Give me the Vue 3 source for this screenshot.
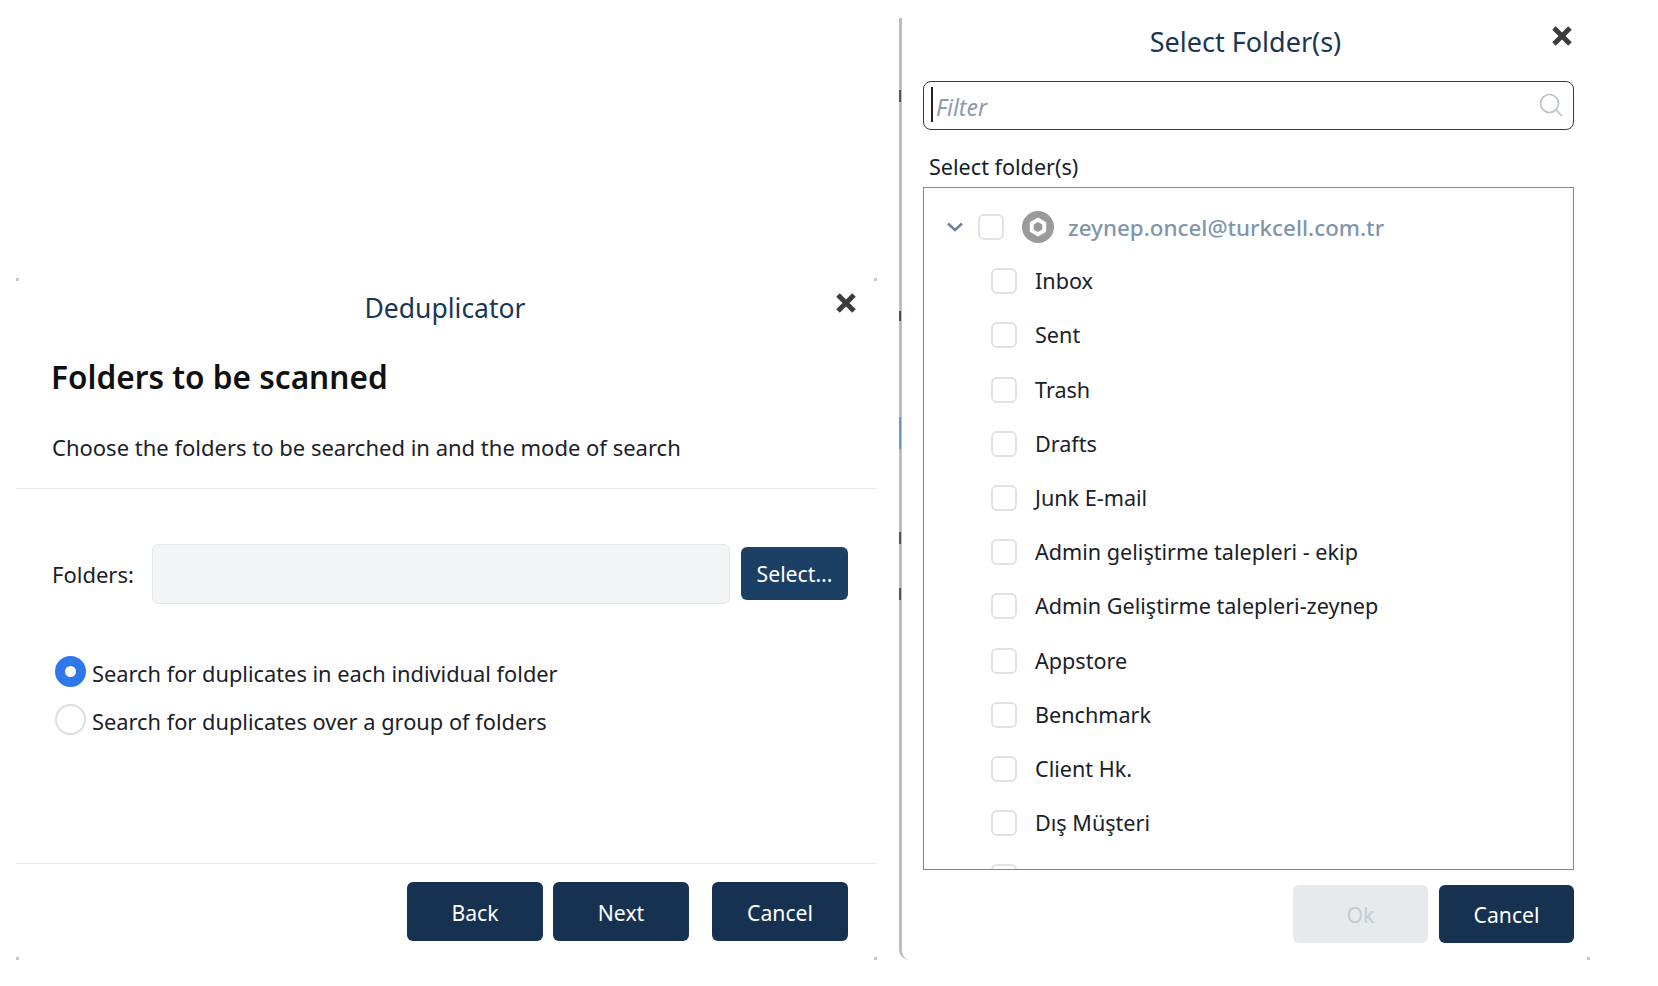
<script setup>
const rows = [
  'Inbox', 'Sent', 'Trash', 'Drafts', 'Junk E-mail',
  'Admin geliştirme talepleri - ekip', 'Admin Geliştirme talepleri-zeynep',
  'Appstore', 'Benchmark', 'Client Hk.', 'Dış Müşteri', 'Genel bilgilendirme'
]
const specks = [
  { top: 72, height: 12, background: '#555' },
  { top: 293, height: 10, background: '#5a4a40' },
  { top: 399, height: 32, background: '#6f97c4' },
  { top: 514, height: 12, background: '#555' },
  { top: 570, height: 12, background: '#555' }
]
</script>

<template>
  <div class="page">
    <section class="left">
      <i class="corner tl"></i><i class="corner tr"></i><i class="corner bl"></i><i class="corner br"></i>
      <header class="left-head">Deduplicator</header>
      <button class="close close-left" aria-label="Close">
        <svg viewBox="0 0 22 22" width="22" height="22"><path d="M3 3 L19 19 M19 3 L3 19" /></svg>
      </button>
      <div class="intro">
        <h1>Folders to be scanned</h1>
        <p>Choose the folders to be searched in and the mode of search</p>
      </div>
      <div class="form-row">
        <label>Folders:</label>
        <div class="readonly"></div>
        <button class="btn select">Select...</button>
      </div>
      <div class="radios">
        <div class="radio-row"><span class="radio on"></span><span class="radio-text">Search for duplicates in each individual folder</span></div>
        <div class="radio-row"><span class="radio"></span><span class="radio-text">Search for duplicates over a group of folders</span></div>
      </div>
      <footer class="left-foot">
        <button class="btn">Back</button>
        <button class="btn">Next</button>
        <button class="btn cancel-gap">Cancel</button>
      </footer>
    </section>

    <section class="right">
      <i v-for="(s, i) in specks" :key="i" class="speck" :style="{ top: s.top + 'px', height: s.height + 'px', background: s.background }"></i>
      <i class="corner rbr"></i>
      <header class="right-head">Select Folder(s)</header>
      <button class="close close-right" aria-label="Close">
        <svg viewBox="0 0 22 22" width="22" height="22"><path d="M3 3 L19 19 M19 3 L3 19" /></svg>
      </button>
      <div class="filter">
        <span class="caret"></span>
        <span class="placeholder">Filter</span>
        <svg class="search" viewBox="0 0 24 24" width="24" height="24">
          <circle cx="10.5" cy="10.5" r="9" />
          <path d="M17 17 L23 23" />
        </svg>
      </div>
      <div class="tree-label">Select folder(s)</div>
      <div class="tree">
        <div class="row root">
          <svg class="chev" viewBox="0 0 16 10" width="16" height="10"><path d="M1 1.5 L8 8 L15 1.5" /></svg>
          <span class="check"></span>
          <svg class="acct" viewBox="0 0 32 32" width="32" height="32">
            <circle cx="16" cy="16" r="16" fill="#9a9a9a" />
            <path d="M16 6.5 L24.2 11.2 V20.8 L16 25.5 L7.8 20.8 V11.2 Z" fill="#fff" />
            <path d="M16 11 L20.3 13.5 V18.5 L16 21 L11.7 18.5 V13.5 Z" fill="#9a9a9a" />
          </svg>
          <span class="email">zeynep.oncel@turkcell.com.tr</span>
        </div>
        <div v-for="r in rows" :key="r" class="row child">
          <span class="check"></span>
          <span class="name">{{ r }}</span>
        </div>
      </div>
      <footer class="right-foot">
        <button class="btn ok" disabled>Ok</button>
        <button class="btn">Cancel</button>
      </footer>
    </section>
  </div>
</template>

<style>
html, body { margin: 0; background: #fff; }
</style>

<style scoped>
.page {
  width: 1658px;
  height: 986px;
  display: flex;
  align-items: flex-start;
  overflow: hidden;
  background: #fff;
  font-family: "Noto Sans", "Open Sans", sans-serif;
  font-size: 21.6px;
  color: #1a2128;
}
button { font-family: inherit; border: 0; cursor: pointer; }
.left {
  position: relative;
  margin: 278px 0 0 16px;
  width: 861px;
  height: 682px;
  display: flex;
  flex-direction: column;
  font-size: 22px;
}
.left-head {
  height: 60px;
  line-height: 60px;
  text-align: center;
  font-size: 26.5px;
  color: #1b3554;
  padding-right: 3px;
}
.close {
  position: absolute;
  padding: 0;
  width: 22px;
  height: 22px;
  background: none;
  line-height: 0;
}
.close svg path { stroke: #3c3c3c; stroke-width: 5; fill: none; }
.close-left { left: 819px; top: 14px; }
.intro { padding: 17px 36px 26px; border-bottom: 1px solid #e6e9ec; }
.intro h1 { margin: 0 0 0 -1px; font-size: 31.6px; line-height: 44px; font-weight: 600; color: #111; }
.intro p { margin: 33px 0 0; line-height: 30px; }
.form-row { display: flex; align-items: center; margin: 55px 29px 0 36px; }
.form-row label { width: 100px; }
.readonly {
  width: 578px;
  height: 60px;
  box-sizing: border-box;
  background: #f2f4f6;
  border: 1px solid #e4e7ea;
  border-radius: 6px;
  margin-right: 11px;
}
.btn {
  width: 136px;
  height: 59px;
  background: #163250;
  color: #fff;
  border-radius: 6px;
  font-size: 21.2px;
}
.left-foot .btn { padding-top: 2px; }
.select { width: 107px; height: 53px; background: #1c3f66; margin-bottom: 2px; }
.radios { margin: 52px 0 0 39px; display: flex; flex-direction: column; gap: 17px; }
.radio-row { display: flex; align-items: center; gap: 6px; height: 31px; }
.radio-text { padding-top: 4px; font-size: 21.8px; }
.radio {
  width: 31px;
  height: 31px;
  box-sizing: border-box;
  border-radius: 50%;
  border: 2px solid #dcdfe2;
  background: #fff;
}
.radio.on { border: 10px solid #2f78ec; }
.left-foot {
  margin-top: auto;
  border-top: 1px solid #e6e9ec;
  padding: 18px 29px 19px 0;
  display: flex;
  justify-content: flex-end;
  gap: 10px;
}
.cancel-gap { margin-left: 13px; }
.corner { position: absolute; width: 3px; height: 3px; background: #c8c8c8; }
.tl { left: 0; top: 0; }
.tr { right: 0; top: 0; }
.bl { left: 0; bottom: 0; }
.br { right: 0; bottom: 0; }
.right {
  position: relative;
  margin: 18px 0 0 22px;
  width: 691px;
  height: 942px;
  box-sizing: border-box;
  border-left: 3px solid #bdbdbd;
  border-bottom-left-radius: 10px;
  padding: 0 16px 0 21px;
  display: flex;
  flex-direction: column;
}
.speck { position: absolute; left: -3px; width: 2px; }
.rbr { right: 0; bottom: 0; }
.right-head {
  height: 47px;
  line-height: 47px;
  margin-bottom: 1px;
  text-align: center;
  font-size: 27px;
  color: #1b3554;
  padding-right: 6px;
}
.close-right { left: 649px; top: 7px; }
.filter {
  position: relative;
  margin-top: 15px;
  height: 49px;
  box-sizing: border-box;
  border: 1.5px solid #1f3f60;
  border-radius: 8px;
  display: flex;
  align-items: center;
  padding-left: 12px;
}
.caret { position: absolute; left: 7px; top: 5px; width: 2px; height: 35px; background: #222; }
.placeholder { font-style: italic; color: #8c9bad; font-size: 23px; padding-top: 2px; }
.search { position: absolute; right: 10px; top: 11px; }
.search circle, .search path { fill: none; stroke: #b9c0c8; stroke-width: 1.6; }
.tree-label { margin-top: 22px; padding-left: 6px; line-height: 30px; height: 30px; color: #15202b; }
.tree {
  margin-top: 5px;
  height: 683px;
  box-sizing: border-box;
  border: 1.5px solid #858585;
  padding-top: 12px;
  overflow: hidden;
}
.row { height: 54.2px; display: flex; align-items: center; }
.root { padding-left: 23px; }
.chev { margin-right: 15px; }
.chev path { fill: none; stroke: #6c8097; stroke-width: 2.4; }
.check {
  flex: none;
  width: 26px;
  height: 26px;
  box-sizing: border-box;
  border: 2px solid #e0e2e5;
  border-radius: 6px;
  background: #fff;
}
.acct { margin-left: 18px; margin-right: 14px; }
.email { color: #8095ad; font-weight: 500; font-size: 22.4px; }
.child { padding-left: 67px; }
.name { margin-left: 18px; padding-bottom: 1px; }
.right-foot { margin-top: 15px; display: flex; justify-content: flex-end; gap: 11px; }
.btn.ok { width: 135px; height: 58px; background: #e7eaed; color: #c2ccd5; cursor: default; }
.right-foot .btn { width: 135px; height: 58px; }
</style>
